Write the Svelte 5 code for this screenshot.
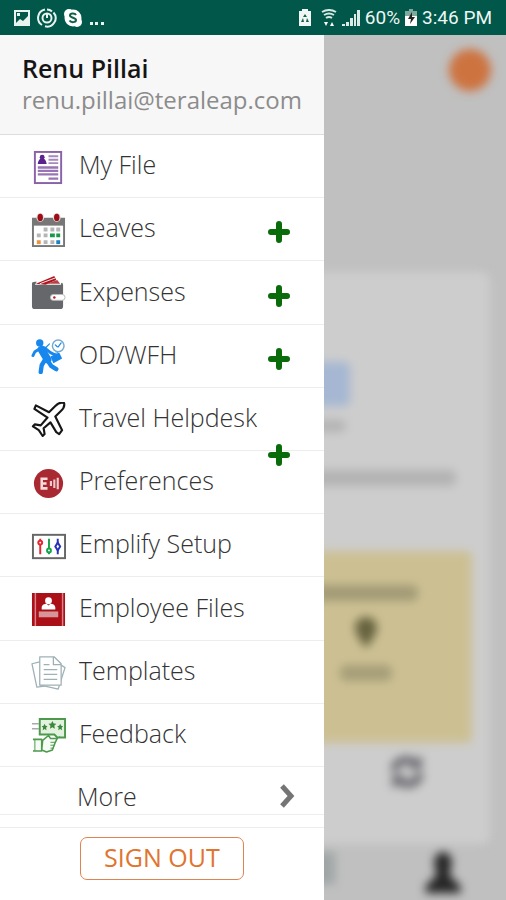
<script lang="ts">
	type Item = { label: string; icon: string; add?: boolean; low?: boolean };

	const items: Item[] = [
		{ label: 'My File', icon: 'file' },
		{ label: 'Leaves', icon: 'calendar', add: true },
		{ label: 'Expenses', icon: 'wallet', add: true },
		{ label: 'OD/WFH', icon: 'runner', add: true },
		{ label: 'Travel Helpdesk', icon: 'plane', add: true, low: true },
		{ label: 'Preferences', icon: 'badge' },
		{ label: 'Emplify Setup', icon: 'sliders' },
		{ label: 'Employee Files', icon: 'book' },
		{ label: 'Templates', icon: 'pages' },
		{ label: 'Feedback', icon: 'feedback' }
	];
</script>

{#snippet icon(name: string)}
	<svg class="icon" viewBox="0 0 36 36" aria-hidden="true">
		{#if name === 'file'}
			<rect x="4" y="2" width="27" height="32" fill="#fff" stroke="#8a62a8" stroke-width="2" />
			<circle cx="11.500" cy="7.500" r="2.500" fill="#5b2191" />
			<path d="M7 14.500c0-3 2-6 4.500-6s4.500 3 4.500 6z" fill="#5b2191" />
			<path d="M18 6.500h10M18 10h10M18 13.500h10" stroke="#a68abc" stroke-width="2" />
			<path d="M7 18h21M7 21.500h21M7 25h21M18 29.500h10" stroke="#9874b4" stroke-width="2.400" />
		{:else if name === 'calendar'}
			<path d="M1 5h34v30H1z" fill="#777" />
			<path d="M3 13h30v20H3z" fill="#fff" />
			<ellipse cx="9.500" cy="4.500" rx="4" ry="4.500" fill="#ddd" />
			<ellipse cx="26.500" cy="4.500" rx="4" ry="4.500" fill="#ddd" />
			<ellipse cx="9.500" cy="4.500" rx="2.800" ry="3.800" fill="#a00b15" />
			<ellipse cx="26.500" cy="4.500" rx="2.800" ry="3.800" fill="#a00b15" />
			<path d="M13 15h4v4h-4zM20 15h4v4h-4zM26 15h4v4h-4zM6 21h4v4H6zM13 21h4v4h-4zM13 28h4v4h-4zM20 28h4v4h-4z" fill="#b5b5b5" />
			<path d="M19.500 21h5v4h-5zM26 21h4v4h-4z" fill="#18994a" />
			<path d="M6 28h4v4H6z" fill="#e89542" />
			<path d="M26 28h4v4h-4z" fill="#2180bf" />
		{:else if name === 'wallet'}
			<path d="M5 8 24 0l2 4-11 5z" fill="#b3131c" />
			<path d="m9 8 16-6" fill="none" stroke="#eee" />
			<path d="m16 8 11-4 3 4z" fill="#b84148" />
			<path d="M1 8q0-2 3-2h2L4 9h27V7q2 0 2 2v22q0 3-3 3H4q-3 0-3-3z" fill="#66676a" />
			<rect x="20" y="19" width="15" height="6" rx="3" fill="#fff" stroke="#bbb" />
			<circle cx="24" cy="22" r="1.300" fill="#a22" />
		{:else if name === 'runner'}
			<g fill="none" stroke="#1787ed" stroke-linecap="round" stroke-linejoin="round">
				<path d="m11 11 6 10" stroke-width="8" />
				<path d="m9 10-5 3-2 4M14 9l6 5 4 2" stroke-width="3" />
				<path d="m14 22-3 5-1 7M17 22l4 6 5 3" stroke-width="4.500" />
				<circle cx="28" cy="7" r="6" stroke="#76a9cf" stroke-width="1.500" />
				<path d="m28 8 3-4M27 8l-2-2M15 9l4-4" stroke-width="1.200" />
			</g>
			<circle cx="9" cy="4" r="3.800" fill="#1787ed" />
			<path d="m20 18 9-4 3 6-9 5z" fill="#1787ed" />
			<path d="m23 17 1-2 4-1" fill="none" stroke="#1787ed" />
		{:else if name === 'plane'}
			<path d="M18.500 10.500 25 4c3-3 6-4 9-3 .8 3-.6 6-3.500 8.500L25 15l7 14-3 4-3-2-6-10-7 6 1 6-2 2-4-6-6-4 2-2 6 1 7-8L3.500 7 5 3.500z" fill="#fff" stroke="#171717" stroke-width="2.200" stroke-linejoin="round" />
		{:else if name === 'badge'}
			<circle cx="18" cy="18" r="15" fill="#a82931" />
			<path d="M17 13h-6v10h6M11 18h5" fill="none" stroke="#f6dddd" stroke-width="2.600" />
			<path d="M20.500 15.500v5M24 14v8.500M27.500 12v12" fill="none" stroke="#f0cccc" stroke-width="2.200" />
		{:else if name === 'sliders'}
			<rect x="2" y="6" width="33" height="24" fill="#fff" stroke="#666" stroke-width="2" />
			<path d="M9.500 10v16" stroke="#e32731" stroke-width="2" />
			<path d="M18.500 10v16" stroke="#18a44a" stroke-width="2" />
			<path d="M27.500 10v16" stroke="#2832b8" stroke-width="2" />
			<circle cx="9.500" cy="14" r="2" fill="#fff" stroke="#e32731" stroke-width="2" />
			<circle cx="18.500" cy="22" r="2" fill="#fff" stroke="#18a44a" stroke-width="2" />
			<path d="m27.500 14 2.500 4-2.500 4-2.500-4z" fill="#fff" stroke="#2832b8" stroke-width="2" />
		{:else if name === 'book'}
			<path d="M1 1h34v34H1z" fill="#ab1019" />
			<path d="M4.500 1v34M32.500 1v34" stroke="#d8848a" stroke-width="1.500" />
			<circle cx="18" cy="9" r="3.500" fill="#fff" />
			<path d="M11 18v-2c0-3 3-4 5-4l2 2 2-2c2 0 5 1 5 4v2z" fill="#fff" />
			<path d="M8 20h20v6H8z" fill="#d89598" />
		{:else if name === 'pages'}
			<g fill="#fff" stroke="#9fb1b6" stroke-width="1.300" stroke-linejoin="round">
				<path d="m9 7-8 2 5 24 16-2z" />
				<path d="m29 9 6 4-7 22-18-4z" />
				<path d="M9 2h15l7 7v22H9z" />
				<path d="M23 2v8h8M13 10h6M13 15h14M13 20h14M13 25h14" fill="none" />
			</g>
		{:else}
			<path d="M1 6h7M1 11h7" stroke="#aaa" stroke-width="1.500" />
			<path d="M9 1h26v19h-8l-3-3H9z" fill="#e3f1df" stroke="#4d994d" stroke-width="2" />
			<path d="m22 3 1.300 2.600 2.700.4-2 2 .5 3-2.500-1.500-2.500 1.500.5-3-2-2 2.700-.4zM14 6l1 2 2 .4-1.500 1.500.5 2.600-2-1.300-2 1.300.5-2.600L11 8.400l2-.4zM30 6l1 2 2 .4-1.500 1.500.5 2.600-2-1.300-2 1.300.5-2.600L27 8.400l2-.4z" fill="#3b873b" />
			<path d="M2 22h9v12H2M12 23l6-5 2 3h7l-2 4-3 8-6 2-5-2z" fill="#f6fbf5" stroke="#4d994d" stroke-width="1.600" stroke-linejoin="round" />
			<path d="M4 22v12M27 21l3-2M20 25h5M20 28h4M20 31h3" stroke="#4d994d" />
		{/if}
	</svg>
{/snippet}

<div class="phone">
	<header class="status">
		<div class="notices">
			<svg width="18" height="18" viewBox="0 0 18 18" aria-hidden="true">
				<path fill="#e8f3ef" fill-rule="evenodd" d="M1 1h16v16H1zM3 3v11l4-4 3 2 5-5V3zm1 1h3v3H4z" />
			</svg>
			<svg width="20" height="20" viewBox="0 0 20 20" fill="none" stroke="#e8f3ef" stroke-width="2" aria-hidden="true">
				<path d="M8 1.500a8.500 8.500 0 0 0-3 15.500M8 18.300A8.500 8.500 0 0 0 16.500 4.500M10 1.500q3 0 5 2" />
				<circle cx="10" cy="10" r="4.500" />
				<path d="M10 5.500V10" />
			</svg>
			<svg width="20" height="20" viewBox="0 0 20 20" aria-hidden="true">
				<circle cx="10" cy="10" r="8.500" fill="#fff" />
				<circle cx="6" cy="6" r="5" fill="#fff" />
				<circle cx="14" cy="14" r="5" fill="#fff" />
				<path d="M13 7c-1-2-6-2-6 .5S13 9.500 13 12s-5 3-6.500.5" fill="none" stroke="#10604c" stroke-width="2" />
			</svg>
			<svg width="18" height="20" viewBox="0 0 18 20" fill="#e8f3ef" aria-hidden="true">
				<path d="M1 14h3v3H1zM6 14h3v3H6zM12 14h3v3h-3z" />
			</svg>
		</div>
		<div class="signals">
			<svg width="14" height="18" viewBox="0 0 14 18" aria-hidden="true">
				<path fill="#f0f6f4" d="M4 0h6v2h3v15H1V2h3z" />
				<path d="m7 5 2 3H5zM3 13l2-4 1 4zM11 13 9 9l-1 4z" fill="#10604c" />
			</svg>
			<svg width="16" height="18" viewBox="0 0 16 18" fill="none" stroke="#d5e7e1" stroke-width="2" aria-hidden="true">
				<path d="M1 3q7-4 14 0M3 6q5-3 10 0M5 9q3-2 6 0" />
				<path d="m3 13 2 4 2-4zM9 17l2-4 2 4z" fill="#fff" stroke="none" />
			</svg>
			<svg width="18" height="18" viewBox="0 0 18 18" fill="#dcebe6" aria-hidden="true">
				<path d="M0 15h3v2H0zM4 13h3v4H4zM8 9h3v8H8zM12 5h2v12h-2zM15 1h3v16h-3z" />
			</svg>
			<span>60%</span>
			<svg width="12" height="18" viewBox="0 0 12 18" aria-hidden="true">
				<path d="M4 0h4v2h4v6H0V2h4z" fill="#7fa99e" />
				<path d="M0 7h12v10H0z" fill="#fff" />
				<path d="M7 3 3 10h3l-1 5 5-7H7z" fill="#222" />
			</svg>
			<span>3:46 PM</span>
		</div>
	</header>

	<div class="stage">
		<main class="page" inert>
			<div class="topbar"><span class="avatar"></span></div>
			<section class="card">
				<span class="doc"></span>
				<span class="smudge caption"></span>
				<span class="smudge line"></span>
				<div class="note">
					<span class="smudge title"></span>
					<svg width="24" height="32" viewBox="0 0 24 32">
						<path fill="#67633f" d="M12 0C5 0 1 5 1 11c0 7 11 20 11 20s11-13 11-20C23 5 19 0 12 0z" />
					</svg>
					<span class="smudge place"></span>
				</div>
				<svg class="refresh" width="36" height="36" viewBox="0 0 36 36" fill="none" stroke="#6c6c72" stroke-width="8">
					<path d="M5 17q2-11 13-11 6 0 10 5M31 19q-2 11-13 11-6 0-10-5" />
					<path d="M19 15h14V1zM17 21H3v14z" fill="#6c6c72" stroke="none" />
				</svg>
			</section>
			<div class="tabs">
				<span class="tab"></span>
				<svg width="36" height="42" viewBox="0 0 36 42" fill="#252525">
					<ellipse cx="18" cy="11" rx="9" ry="11" />
					<path d="M12 16h12l2 10q10 4 10 15H0q0-11 10-15z" />
				</svg>
			</div>
		</main>

		<aside class="drawer">
			<div class="profile">
				<h1>Renu Pillai</h1>
				<p>renu.pillai@teraleap.com</p>
			</div>
			<nav>
				<ul>
					{#each items as item}
						<li>
							<a href="#{item.icon}">
								{@render icon(item.icon)}
								<span>{item.label}</span>
							</a>
							{#if item.add}
								<button class="add" class:low={item.low} aria-label="Add {item.label}">
									<svg width="22" height="22" viewBox="0 0 22 22" aria-hidden="true">
										<path d="M11 3v16M3 11h16" stroke="#0a6b0a" stroke-width="6" stroke-linecap="round" />
									</svg>
								</button>
							{/if}
						</li>
					{/each}
				</ul>
				<a class="more" href="#more">
					<span>More</span>
					<svg width="16" height="24" viewBox="0 0 16 24" fill="none" stroke="#757575" stroke-width="5" aria-hidden="true">
						<path d="m2 2 9 10-9 10" />
					</svg>
				</a>
			</nav>
			<footer>
				<button class="signout">SIGN OUT</button>
			</footer>
		</aside>
	</div>
</div>

<style>
	:global(body) {
		margin: 0;
	}

	.phone {
		display: flex;
		flex-direction: column;
		min-height: 100vh;
		font-family: 'Open Sans', 'Noto Sans', sans-serif;
		background: #c0c0c0;
	}

	.status {
		display: flex;
		justify-content: space-between;
		align-items: center;
		box-sizing: border-box;
		height: 35px;
		padding: 0 14px 0 13px;
		background: #00574a;
		color: #edf6f3;
		font: 19px Roboto, sans-serif;
	}

	.notices,
	.signals {
		display: flex;
		align-items: center;
		gap: 6px;
	}

	.signals {
		gap: 5px;
	}

	.signals svg:first-child {
		margin-right: 4px;
	}

	.stage {
		display: grid;
		flex: 1;
		overflow: hidden;
	}

	.page,
	.drawer {
		grid-area: 1 / 1;
	}

	/* page behind the open drawer */
	.page {
		display: flex;
		flex-direction: column;
		filter: blur(5px);
	}

	.topbar {
		display: flex;
		justify-content: flex-end;
		box-sizing: border-box;
		height: 237px;
		padding: 14px 15px;
	}

	.avatar {
		width: 42px;
		height: 42px;
		border-radius: 50%;
		background: #cd7340;
	}

	.card {
		display: flex;
		flex: 1;
		flex-direction: column;
		margin: 0 16px;
		border-radius: 8px;
		background: #cdcdcd;
	}

	.doc {
		width: 44px;
		height: 44px;
		margin: 90px 0 0 290px;
		border-radius: 6px;
		background: #a5b7d2;
	}

	.smudge {
		height: 12px;
		border-radius: 6px;
		background: #b3b3b3;
	}

	.caption {
		width: 32px;
		margin: 14px 0 0 298px;
	}

	.line {
		height: 16px;
		margin: 38px 34px 0 20px;
	}

	.note {
		display: flex;
		flex-direction: column;
		align-items: center;
		gap: 16px;
		box-sizing: border-box;
		height: 192px;
		width: 212px;
		margin: 65px 18px 0 auto;
		padding-top: 34px;
		border-radius: 6px;
		background: #ccc093;
	}

	.title {
		width: 104px;
		height: 16px;
		background: #a39b76;
	}

	.place {
		width: 52px;
		height: 16px;
		background: #a69e78;
	}

	.refresh {
		align-self: flex-end;
		margin: 11px 65px 0 0;
	}

	.tabs {
		display: flex;
		justify-content: flex-end;
		gap: 90px;
		padding: 8px 45px 6px 0;
	}

	.tab {
		width: 32px;
		height: 32px;
		background: #9fa5a5;
	}

	.drawer {
		z-index: 1;
		display: flex;
		flex-direction: column;
		width: 64%;
		background: #fff;
		color: #333;
	}

	.profile {
		box-sizing: border-box;
		height: 100px;
		padding: 17px 22px 0;
		border-bottom: 1px solid #ddd;
		background: #f7f7f7;
	}

	h1 {
		margin: 0;
		color: #151515;
		font-size: 25px;
		font-weight: 600;
		line-height: 32px;
	}

	.profile p {
		margin: 0;
		color: #8c8c8c;
		font-size: 24px;
		line-height: 32px;
	}

	nav {
		display: flex;
		flex: 1;
		flex-direction: column;
		border-bottom: 1px solid #ededed;
	}

	ul {
		display: flex;
		flex: 1;
		flex-direction: column;
		margin: 0;
		padding: 0;
		list-style: none;
	}

	li {
		position: relative;
		display: flex;
		flex: 1;
		align-items: center;
		border-bottom: 1px solid #ededed;
	}

	a {
		display: flex;
		flex: 1;
		align-items: center;
		color: inherit;
		font-size: 25px;
		font-weight: 300;
		line-height: 32px;
		text-decoration: none;
	}

	li a {
		gap: 13px;
		padding-left: 31px;
	}

	li a span {
		padding-bottom: 4px;
	}

	.icon {
		width: 35px;
		height: 35px;
		margin-top: 2px;
	}

	.add {
		display: flex;
		margin: 6px 34px 0 0;
		padding: 0;
		border: 0;
		background: none;
	}

	.add.low {
		position: absolute;
		right: 0;
		bottom: -16px;
		z-index: 1;
	}

	.more {
		flex: none;
		justify-content: space-between;
		margin-bottom: 12px;
		padding: 13px 28px 2px 77px;
		border-bottom: 1px solid #ededed;
	}

	footer {
		display: flex;
		justify-content: center;
		padding: 9px 0 20px;
	}

	.signout {
		width: 164px;
		height: 43px;
		padding: 0 0 3px;
		border: 1px solid #df8350;
		border-radius: 7px;
		background: #fff;
		color: #e0752f;
		font: 25px/32px 'Open Sans', 'Noto Sans', sans-serif;
	}
</style>
